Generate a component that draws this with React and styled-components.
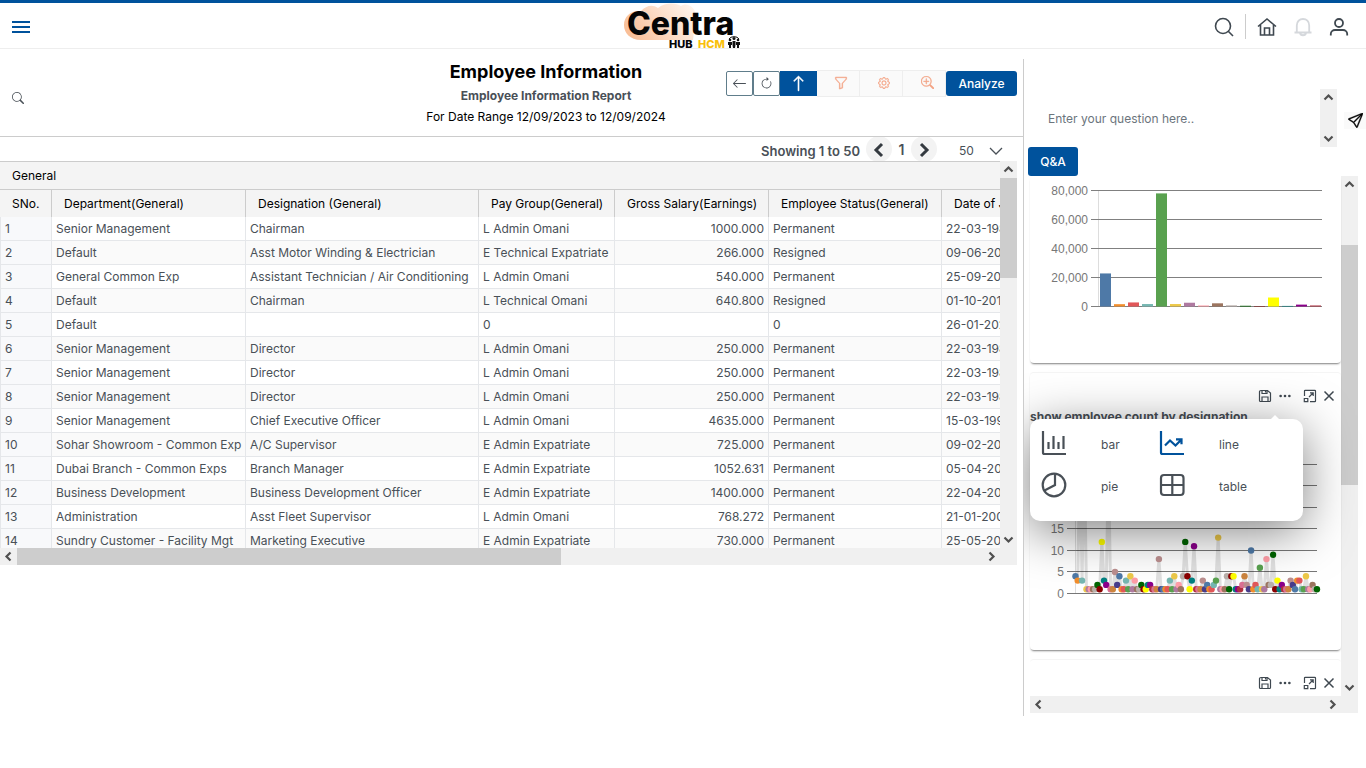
import React from 'react';
import styled, { createGlobalStyle, css } from 'styled-components';
import {
  BsArrowLeft,
  BsArrowClockwise,
  BsArrowUp,
  BsFunnel,
  BsGear,
  BsZoomIn,
  BsSearch,
  BsThreeDots,
  BsSend,
} from 'react-icons/bs';

const columns = [
  { label: 'SNo.', width: 52 },
  { label: 'Department(General)', width: 194 },
  { label: 'Designation (General)', width: 233 },
  { label: 'Pay Group(General)', width: 136 },
  { label: 'Gross Salary(Earnings)', width: 154, numeric: true },
  { label: 'Employee Status(General)', width: 173 },
  { label: 'Date of Joining(General)', width: 173 },
];

const employees = [
  ['1', 'Senior Management', 'Chairman', 'L Admin Omani', '1000.000', 'Permanent', '22-03-1988'],
  ['2', 'Default', 'Asst Motor Winding & Electrician', 'E Technical Expatriate', '266.000', 'Resigned', '09-06-2008'],
  ['3', 'General Common Exp', 'Assistant Technician / Air Conditioning', 'L Admin Omani', '540.000', 'Permanent', '25-09-2008'],
  ['4', 'Default', 'Chairman', 'L Technical Omani', '640.800', 'Resigned', '01-10-2017'],
  ['5', 'Default', '', '0', '', '0', '26-01-2023'],
  ['6', 'Senior Management', 'Director', 'L Admin Omani', '250.000', 'Permanent', '22-03-1988'],
  ['7', 'Senior Management', 'Director', 'L Admin Omani', '250.000', 'Permanent', '22-03-1988'],
  ['8', 'Senior Management', 'Director', 'L Admin Omani', '250.000', 'Permanent', '22-03-1988'],
  ['9', 'Senior Management', 'Chief Executive Officer', 'L Admin Omani', '4635.000', 'Permanent', '15-03-1998'],
  ['10', 'Sohar Showroom - Common Exp', 'A/C Supervisor', 'E Admin Expatriate', '725.000', 'Permanent', '09-02-2008'],
  ['11', 'Dubai Branch - Common Exps', 'Branch Manager', 'E Admin Expatriate', '1052.631', 'Permanent', '05-04-2008'],
  ['12', 'Business Development', 'Business Development Officer', 'E Admin Expatriate', '1400.000', 'Permanent', '22-04-2008'],
  ['13', 'Administration', 'Asst Fleet Supervisor', 'L Admin Omani', '768.272', 'Permanent', '21-01-2008'],
  ['14', 'Sundry Customer - Facility Mgt', 'Marketing Executive', 'E Admin Expatriate', '730.000', 'Permanent', '25-05-2008'],
];

const palette = [
  '#4e79a7', '#f28e2c', '#e15759', '#76b7b2', '#59a14f', '#edc949', '#af7aa1', '#ff9da7', '#9c755f', '#bab0ab',
  '#006400', '#8b0000', '#ffff00', '#008080', '#8b008b', '#b03040', '#db7093', '#cd853f', '#bc8f8f', '#483d8b',
];

const barValues = [22800, 1600, 2800, 1700, 78000, 1700, 2600, 700, 2200, 800, 500, 300, 6200, 400, 1300, 700];

const designationCounts = [
  4, 3, 40, 3, 38, 1, 1, 1, 1, 1, 2, 1, 12, 3, 2, 30, 1, 1, 5, 2,
  4, 1, 1, 3, 1, 4, 1, 3, 1, 1, 2, 1, 1, 2, 2, 1, 1, 1, 8, 1,
  1, 1, 1, 3, 1, 4, 1, 2, 1, 4, 12, 4, 1, 3, 11, 1, 1, 1, 3, 1,
  2, 1, 1, 2, 3, 13, 1, 1, 1, 4, 1, 4, 4, 1, 1, 1, 2, 4, 2, 1,
  10, 1, 2, 1, 6, 1, 1, 8, 2, 2, 9, 1, 3, 1, 2, 1, 1, 1, 3, 2,
  1, 3, 3, 1, 1, 4, 1, 1, 2, 1, 1,
];

const Chevron = ({ dir }) => {
  const d = {
    up: 'M4.500 10.500 8.500 6.500l4 4',
    down: 'M4.500 6.500l4 4 4-4',
    left: 'M10.500 4.500l-4 4 4 4',
    right: 'M6.500 4.500l4 4-4 4',
  }[dir];
  return (
    <svg width="17" height="17" viewBox="0 0 17 17" fill="none" stroke="#505050" strokeWidth="2.200" aria-hidden="true">
      <path d={d} />
    </svg>
  );
};

const ScrollBar = ({ horizontal, before, thumb, after }) => (
  <Track $horizontal={horizontal}>
    <ScrollArrow type="button" tabIndex={-1} aria-label={horizontal ? 'Scroll left' : 'Scroll up'}>
      <Chevron dir={horizontal ? 'left' : 'up'} />
    </ScrollArrow>
    <TrackPart $grow={before} />
    <TrackPart $grow={thumb} $thumb />
    <TrackPart $grow={after} />
    <ScrollArrow type="button" tabIndex={-1} aria-label={horizontal ? 'Scroll right' : 'Scroll down'}>
      <Chevron dir={horizontal ? 'right' : 'down'} />
    </ScrollArrow>
  </Track>
);

const LogoSvg = styled.svg`
  overflow: visible;
`;

const Logo = () => (
  <LogoSvg width="120" height="46" viewBox="0 0 120 46" role="img" aria-label="Centra HUB HCM">
    <defs>
      <linearGradient id="cloud" x1="0" y1="0.6" x2="1" y2="0.2">
        <stop offset="0" stopColor="#f9bf98" />
        <stop offset="0.5" stopColor="#fcdcc6" />
        <stop offset="1" stopColor="#fff4ec" />
      </linearGradient>
    </defs>
    <path
      d="M18 37C7 37 1 30 1 22 1 13 8 7 18 8 23 3 29 1 35 5 43-1 53 0 58 3 63-1 71 3 73 11L70 37Z"
      fill="url(#cloud)"
    />
    <text x="4" y="32" fontFamily="Inter, sans-serif" fontWeight="800" fontSize="32" fill="#050505">Centra</text>
    <text x="46" y="45" fontFamily="Inter, sans-serif" fontWeight="800" fontSize="11" fill="#050505">HUB</text>
    <text x="75" y="45" fontFamily="Inter, sans-serif" fontWeight="800" fontSize="11" fill="#f9bf0b">HCM</text>
    <g fill="#111" transform="translate(1 -1)">
      <path d="M105 37a5.500 4 0 0 1 10 0" fill="none" stroke="#111" />
      <circle cx="106" cy="38" r="1.300" />
      <circle cx="110" cy="36.500" r="1.500" />
      <circle cx="114" cy="38" r="1.300" />
      <path d="M104 40h4v3h-1v3h-2v-3h-1zM108.500 39h3v4l-.5 3h-2l-.5-3zM112 40h4v3h-1v3h-2v-3h-1z" />
    </g>
  </LogoSvg>
);

const HomeIcon = () => (
  <svg width="20" height="20" viewBox="0 0 20 20" fill="none" stroke="currentColor" strokeWidth="1.600" aria-hidden="true">
    <path d="M1 9.500 10 2l9 7.500M3.500 8v10h13V8M7.500 18v-7h5v7" />
  </svg>
);

const BellIcon = () => (
  <svg width="20" height="20" viewBox="0 0 20 20" fill="none" stroke="currentColor" strokeWidth="1.800" aria-hidden="true">
    <path d="M1.500 15.500h17M3.800 15.500V8.500C3.800 4.500 6.500 2 10 2s6.200 2.500 6.200 6.500v7M7 16c.5 3 5.500 3 6 0" />
  </svg>
);

const UserIcon = () => (
  <svg width="20" height="20" viewBox="0 0 20 20" fill="none" stroke="currentColor" strokeWidth="1.800" aria-hidden="true">
    <circle cx="10" cy="6" r="4" />
    <path d="M1.800 18.500v-1.500c0-2.500 2-4 4.200-4h8c2.200 0 4.200 1.500 4.200 4v1.500" />
  </svg>
);

const SearchIcon = () => (
  <svg width="20" height="20" viewBox="0 0 20 20" fill="none" stroke="currentColor" strokeWidth="1.600" aria-hidden="true">
    <circle cx="9" cy="9" r="7.500" />
    <path d="M14 14l5 5" />
  </svg>
);

const SaveIcon = () => (
  <svg width="14" height="14" viewBox="0 0 14 14" fill="none" stroke="currentColor" strokeWidth="1.200" aria-hidden="true">
    <path d="M3 1.500h6.500L12.500 4v7.500c0 .6-.4 1-1 1h-9c-.6 0-1-.4-1-1v-9c0-.6.500-1 1.500-1zM4 12.500V8h6v4.500M4 1.500v3h5v-3M7.500 2v1.500" />
  </svg>
);

const ExpandIcon = () => (
  <svg width="14" height="14" viewBox="0 0 14 14" fill="none" stroke="currentColor" strokeWidth="1.200" aria-hidden="true">
    <path d="M1.500 7V2c0-.4.300-.7.700-.7h9.600c.4 0 .7.300.7.700v10c0 .4-.3.700-.7.700H7M1.300 9.500h3.500v3.200H1.300zM6 8l4-4M7 3.800h3.200V7" />
  </svg>
);

const CloseIcon = () => (
  <svg width="12" height="12" viewBox="0 0 12 12" fill="none" stroke="currentColor" strokeWidth="1.500" aria-hidden="true">
    <path d="M1.500 1.500l9 9M10.500 1.500l-9 9" />
  </svg>
);

const typeIcons = {
  bar: <path d="M2 1v21.500c0 .8.500 1.500 1.500 1.500H25M7.500 19v-7M12.500 19V6M17.500 19v-7M22.500 19V6" />,
  line: <path d="M2 1v21.500c0 .8.500 1.500 1.500 1.500H25M6 15.500l5-5 5.500 5L22 10M17 9.300h5.500v5" />,
  pie: (
    <>
      <circle cx="13" cy="13" r="11.300" />
      <path d="M14 2v11L3.500 18.500" />
    </>
  ),
  table: (
    <>
      <rect x="2" y="3" width="22.500" height="20" rx="3" />
      <path d="M13.300 3v20M2 13h22.500" />
    </>
  ),
};

const BarChart = () => {
  const base = 130.5;
  const ticks = [80000, 60000, 40000, 20000, 0];
  const y = (v) => base - (v * 29) / 20000;
  return (
    <Chart viewBox="0 0 311 187" role="img" aria-label="Bar chart">
      <line x1="68.500" x2="68.500" y1="14" y2="130" stroke="#ddd" />
      {ticks.map((t) => (
        <g key={t}>
          <line x1="61" x2="292" y1={y(t)} y2={y(t)} stroke="#808080" />
          <text x="58" y={y(t) + 4} textAnchor="end">{t.toLocaleString('en-US')}</text>
        </g>
      ))}
      {barValues.map((v, i) => (
        <rect key={i} x={70 + i * 14} y={y(v)} width="11" height={base - y(v)} fill={palette[i]} />
      ))}
    </Chart>
  );
};

const LineChart = () => {
  const base = 167.5;
  const x = (i) => 45.5 + i * 2.195;
  const y = (v) => base - v * 4.3;
  const path = designationCounts.map((v, i) => `${i ? 'L' : 'M'}${x(i)} ${y(Math.min(v, 32))}`).join('');
  return (
    <Chart viewBox="0 0 311 224" role="img" aria-label="Employee count by designation">
      <line x1="45.500" x2="45.500" y1="35" y2="167" stroke="#ddd" />
      {[0, 5, 10, 15, 20, 25, 30].map((t) => (
        <g key={t}>
          <line x1="37" x2="287" y1={Math.round(y(t)) - 0.5} y2={Math.round(y(t)) - 0.5} stroke="#777" />
          <text x="34" y={y(t) + 4} textAnchor="end">{t}</text>
        </g>
      ))}
      <path d={path} fill="none" stroke="#000" strokeOpacity="0.120" strokeWidth="3" strokeLinejoin="round" />
      {designationCounts.map((v, i) => v <= 20 && (
        <circle key={i} cx={x(i)} cy={y(v)} r="3.200" fill={palette[i % 20]} />
      ))}
    </Chart>
  );
};

const CardTools = () => (
  <Tools>
    <IconButton type="button" aria-label="Save"><SaveIcon /></IconButton>
    <IconButton type="button" aria-label="Chart type"><BsThreeDots size={14} /></IconButton>
    <IconButton type="button" aria-label="Expand"><ExpandIcon /></IconButton>
    <IconButton type="button" aria-label="Close"><CloseIcon /></IconButton>
  </Tools>
);

const ChartTypeMenu = () => (
  <TypeMenu>
    {['bar', 'line', 'pie', 'table'].map((type) => (
      <TypeButton key={type} type="button" $active={type === 'line'}>
        <svg width="26" height="26" viewBox="0 0 26 26" fill="none" stroke="currentColor" strokeWidth="2.200" aria-hidden="true">
          {typeIcons[type]}
        </svg>
        <span>{type}</span>
      </TypeButton>
    ))}
  </TypeMenu>
);

const App = () => {
  return (
    <>
      <GlobalStyle />
      <Header>
        <HeaderSide>
          <MenuButton type="button" aria-label="Menu">
            <span />
            <span />
            <span />
          </MenuButton>
        </HeaderSide>
        <Logo />
        <HeaderSide $end>
          <IconButton type="button" aria-label="Search"><SearchIcon /></IconButton>
          <HeaderDivider />
          <HeaderNav>
            <IconButton type="button" aria-label="Home"><HomeIcon /></IconButton>
            <IconButton type="button" aria-label="Notifications" $muted><BellIcon /></IconButton>
            <IconButton type="button" aria-label="Account"><UserIcon /></IconButton>
          </HeaderNav>
        </HeaderSide>
      </Header>

      <Main>
        <Report>
          <ReportHeader>
            <ReportSearch type="button" aria-label="Search report"><BsSearch size={12} /></ReportSearch>
            <Titles>
              <Title>Employee Information</Title>
              <Subtitle>Employee Information Report</Subtitle>
              <DateRange>For Date Range 12/09/2023 to 12/09/2024</DateRange>
            </Titles>
            <Actions>
              <OutlineButton type="button" aria-label="Back"><BsArrowLeft size={15} /></OutlineButton>
              <OutlineButton type="button" aria-label="Refresh"><BsArrowClockwise size={13} /></OutlineButton>
              <UploadButton type="button" aria-label="Export"><BsArrowUp size={17} strokeWidth={0.5} /></UploadButton>
              <SoftButton type="button" aria-label="Filter"><BsFunnel size={14} strokeWidth={0.4} /></SoftButton>
              <SoftButton type="button" aria-label="Settings"><BsGear size={12} strokeWidth={0.4} /></SoftButton>
              <SoftButton type="button" aria-label="Zoom"><BsZoomIn size={13} strokeWidth={0.4} /></SoftButton>
              <PrimaryButton type="button">Analyze</PrimaryButton>
            </Actions>
          </ReportHeader>

          <Pager>
            <Showing>Showing 1 to 50</Showing>
            <PageButton type="button" aria-label="Previous page">
              <svg width="14" height="16" viewBox="0 0 14 16" fill="none" stroke="currentColor" strokeWidth="3"><path d="M10 2 4 8l6 6" /></svg>
            </PageButton>
            <PageNumber>1</PageNumber>
            <PageButton type="button" aria-label="Next page">
              <svg width="14" height="16" viewBox="0 0 14 16" fill="none" stroke="currentColor" strokeWidth="3"><path d="M4 2l6 6-6 6" /></svg>
            </PageButton>
            <PageSize>
              <select aria-label="Rows per page" defaultValue="50">
                <option>50</option>
                <option>100</option>
              </select>
              <svg width="14" height="8" viewBox="0 0 14 8" fill="none" stroke="currentColor" strokeWidth="1.300"><path d="M1 1l6 6 6-6" /></svg>
            </PageSize>
          </Pager>

          <TableArea>
            <TableRow>
              <TableView>
                <Table>
                  <colgroup>
                    {columns.map((c) => <col key={c.label} width={c.width} />)}
                  </colgroup>
                  <thead>
                    <tr>
                      <th colSpan={columns.length}>General</th>
                    </tr>
                    <tr>
                      {columns.map((c) => <th key={c.label} scope="col">{c.label}</th>)}
                    </tr>
                  </thead>
                  <tbody>
                    {employees.map((row) => (
                      <tr key={row[0]}>
                        {row.map((cell, i) => <Cell key={i} $numeric={columns[i].numeric}>{cell}</Cell>)}
                      </tr>
                    ))}
                  </tbody>
                </Table>
              </TableView>
              <ScrollBar before={0} thumb={100} after={253} />
            </TableRow>
            <CornerRow>
              <ScrollBar horizontal before={0} thumb={544} after={422} />
            </CornerRow>
          </TableArea>
        </Report>

        <Insights>
          <Question>
            <QuestionBox>
              <textarea aria-label="Question" placeholder="Enter your question here.." />
              <ScrollBar before={0} thumb={0} after={1} />
            </QuestionBox>
            <SendButton type="button" aria-label="Send"><BsSend size={15} stroke="currentColor" strokeWidth={0.5} /></SendButton>
          </Question>
          <QaButton type="button">Q&amp;A</QaButton>
          <Feed>
            <FeedRow>
              <Cards>
                <Card>
                  <BarChart />
                </Card>
                <Card>
                  <CardTools />
                  <CardTitle>show employee count by designation</CardTitle>
                  <LineChart />
                  <ChartTypeMenu />
                </Card>
                <Card $open>
                  <CardTools />
                </Card>
              </Cards>
              <ScrollBar before={52} thumb={240} after={194} />
            </FeedRow>
            <CornerRow>
              <ScrollBar horizontal before={0} thumb={0} after={1} />
            </CornerRow>
          </Feed>
        </Insights>
      </Main>
    </>
  );
};

export default App;

const GlobalStyle = createGlobalStyle`
  * {
    box-sizing: border-box;
  }

  body {
    margin: 0;
    background: #fff;
    color: #495057;
    font-family: Inter, 'Liberation Sans', sans-serif;
    font-size: 12px;
  }

  button, select, textarea {
    font: inherit;
    color: inherit;
  }

  button {
    display: flex;
    align-items: center;
    justify-content: center;
    padding: 0;
    border: 0;
    background: none;
    cursor: pointer;
  }
`;

const Header = styled.header`
  display: grid;
  grid-template-columns: 1fr auto 1fr;
  align-items: center;
  height: 49px;
  border-top: 3px solid #00529c;
  border-bottom: 1px solid #eee;
`;

const HeaderSide = styled.div`
  display: flex;
  align-items: center;
  justify-content: ${(props) => (props.$end ? 'flex-end' : 'flex-start')};
  padding: 1px 17px 0 12px;
`;

const MenuButton = styled.button`
  flex-direction: column;
  gap: 3px;
  width: 18px;

  span {
    width: 18px;
    height: 2px;
    background: #00529c;
  }
`;

const IconButton = styled.button`
  color: ${(props) => (props.$muted ? '#d5d8dc' : '#3f4850')};
`;

const HeaderDivider = styled.div`
  width: 1px;
  height: 25px;
  margin: 0 11px;
  background: #ccc;
`;

const HeaderNav = styled.nav`
  display: flex;
  gap: 16px;
`;

const Main = styled.main`
  display: grid;
  grid-template-columns: minmax(0, 1fr) 343px;
  align-items: start;
`;

const Report = styled.section`
  min-width: 0;
`;

const ReportHeader = styled.div`
  display: grid;
  grid-template-columns: 1fr 1fr auto;
  height: 88px;
  padding-right: 6px;
  border-bottom: 1px solid #ccc;
`;

const ReportSearch = styled.button`
  align-self: start;
  justify-self: start;
  margin: 43px 0 0 12px;
`;

const Titles = styled.div`
  display: flex;
  flex-direction: column;
  align-items: center;
  padding: 12px 0 0 3px;
  white-space: nowrap;
`;

const Title = styled.h1`
  margin: 0;
  color: #000;
  font-size: 18px;
  font-weight: 700;
  line-height: 22px;
`;

const Subtitle = styled.h2`
  margin: 4px 0 0;
  font-size: 12px;
  font-weight: 700;
  line-height: 18px;
`;

const DateRange = styled.div`
  margin-top: 3px;
  color: #000;
  font-size: 12px;
  line-height: 18px;
`;

const Actions = styled.div`
  display: flex;
  align-items: center;
  align-self: start;
  margin-top: 21px;
`;

const OutlineButton = styled.button`
  width: 27px;
  height: 25px;
  border: 1px solid #607d8b;
  border-radius: 2px;
`;

const UploadButton = styled.button`
  width: 37px;
  height: 25px;
  background: #00529c;
  color: #fff;
  stroke: #fff;
`;

const SoftButton = styled.button`
  width: 43px;
  height: 27px;
  padding: 0 0 2px 6px;
  border: 1px solid #eee;
  border-left: 0;
  background: #fafafa;
  color: #f4a384;
  stroke: #f4a384;
`;

const PrimaryButton = styled.button`
  width: 71px;
  height: 25px;
  border-radius: 3px;
  background: #00529c;
  color: #fff;
  font-size: 12px;
  font-weight: 500;
`;

const Pager = styled.div`
  display: flex;
  align-items: center;
  justify-content: flex-end;
  height: 24px;
  padding-right: 20px;
  overflow: hidden;
`;

const Showing = styled.span`
  margin-right: 6px;
  padding-top: 3px;
  font-size: 13px;
  font-weight: 600;
`;

const PageButton = styled.button`
  flex: none;
  width: 26px;
  height: 26px;
  padding-top: 2px;
  border-radius: 50%;
  background: #f3f3f3;
  color: #343a40;
`;

const PageNumber = styled.span`
  width: 19px;
  font-size: 14px;
  font-weight: 600;
  text-align: center;
`;

const PageSize = styled.label`
  display: flex;
  align-items: center;
  gap: 2px;
  padding: 3px 0 0 22px;

  select {
    width: 28px;
    padding: 0;
    border: 0;
    background: none;
    appearance: none;
    font-size: 12px;
  }
`;

const TableArea = styled.div`
  margin-right: 6px;
  min-width: 0;
`;

const TableRow = styled.div`
  display: flex;
  height: 387px;
`;

const TableView = styled.div`
  flex: 1;
  min-width: 0;
  overflow: hidden;
`;

const Table = styled.table`
  width: 1115px;
  table-layout: fixed;
  border-collapse: separate;
  border-spacing: 0;
  font-size: 12px;
  white-space: nowrap;

  th {
    height: 28px;
    padding: 0 0 0 12px;
    border-top: 1px solid #ccc;
    border-right: 1px solid #ccc;
    background: #f4f4f4;
    color: #000;
    font-weight: 400;
    text-align: left;
  }

  tbody tr:nth-child(even) {
    background: #fafafa;
  }

  tbody td:first-child {
    background: #f8f9fb;
    border-left: 1px solid #e5e7ea;
  }
`;

const Cell = styled.td`
  height: 24px;
  padding: 0 4px;
  border-right: 1px solid #e5e7ea;
  border-bottom: 1px solid #e5e7ea;
  text-align: ${(props) => (props.$numeric ? 'right' : 'left')};
`;

const Track = styled.div`
  display: flex;
  flex: none;
  width: 17px;
  flex-direction: column;
  background: #f0f0f0;

  ${(props) => props.$horizontal && css`
    flex: 1;
    width: auto;
    height: 17px;
    flex-direction: row;
  `}
`;

const TrackPart = styled.div`
  flex: ${(props) => props.$grow} 1 0;
  background: ${(props) => (props.$thumb ? '#cdcdcd' : 'transparent')};
`;

const ScrollArrow = styled.button`
  flex: none;
  width: 17px;
  height: 17px;
`;

const CornerRow = styled.div`
  display: flex;
  padding-right: 17px;
  background: #f0f0f0;
`;

const Insights = styled.aside`
  margin-top: 10px;
  padding: 30px 0 3px 4px;
  border-left: 1px solid #ccc;
  overflow: hidden;
`;

const Question = styled.div`
  display: flex;
  align-items: center;
  height: 58px;
`;

const QuestionBox = styled.div`
  display: flex;
  flex: 1;
  align-self: stretch;

  textarea {
    flex: 1;
    min-width: 0;
    padding: 22px 0 0 20px;
    border: 0;
    outline: 0;
    resize: none;
    overflow: hidden;
    font-size: 12px;
    line-height: 16px;
  }

  textarea::placeholder {
    color: #6c757d;
  }
`;

const SendButton = styled.button`
  width: 22px;
  height: 17px;
  margin: 4px 0 0 7px;
  background: #fafafa;
  color: #000;
`;

const QaButton = styled.button`
  width: 50px;
  height: 29px;
  border-radius: 3px;
  background: #00529c;
  color: #fff;
  font-weight: 500;
`;

const Feed = styled.div`
  margin: 0 8px 0 2px;
`;

const FeedRow = styled.div`
  display: flex;
`;

const Cards = styled.div`
  display: flex;
  flex: 1;
  min-width: 0;
  flex-direction: column;
  gap: 9px;
`;

const Card = styled.article`
  position: relative;
  border-radius: 4px;
  box-shadow: 0 2px 2px -1px rgba(0, 0, 0, 0.5);

  &:not(:first-child) {
    border-top: 1px solid #f5f5f5;
  }

  ${(props) => props.$open && css`
    height: 37px;
    border-radius: 4px 4px 0 0;
    box-shadow: none;
  `}
`;

const Tools = styled.div`
  display: flex;
  align-items: center;
  justify-content: flex-end;
  gap: 6px;
  height: 31px;
  padding: 14px 6px 0 0;

  button:nth-child(3) {
    margin-left: 5px;
  }
`;

const CardTitle = styled.h3`
  height: 18px;
  margin: 4px 0 0;
  font-size: 12px;
  font-weight: 700;
  line-height: 18px;
`;

const Chart = styled.svg`
  display: block;
  width: 100%;
  height: auto;

  text {
    fill: #777;
    font-family: 'Liberation Sans', sans-serif;
    font-size: 12px;
  }
`;

const TypeMenu = styled.div`
  position: absolute;
  z-index: 2;
  top: 46px;
  left: 0;
  display: grid;
  grid-template-columns: 118px 118px;
  grid-auto-rows: 42px;
  width: 273px;
  height: 102px;
  padding: 3px 0 0 11px;
  border-radius: 10px;
  background: #fff;
  box-shadow: 0 10px 50px rgba(0, 0, 0, 0.5);

  &::before {
    content: '';
    position: absolute;
    top: -4px;
    right: 23px;
    border: 5px solid transparent;
    border-top: 0;
    border-bottom-color: #fff;
  }
`;

const TypeButton = styled.button`
  justify-content: flex-start;
  gap: 34px;

  svg {
    color: ${(props) => (props.$active ? '#00529c' : '#495057')};
  }

  span {
    padding-top: 2px;
  }
`;
